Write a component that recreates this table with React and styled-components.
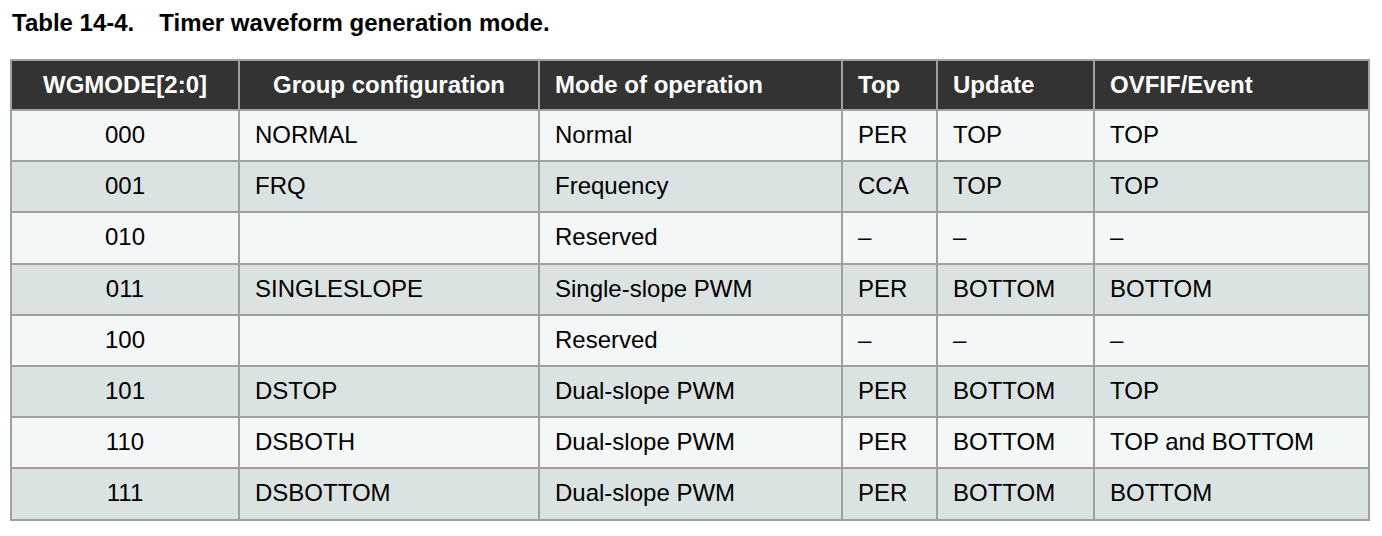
import React from 'react';
import styled, { createGlobalStyle } from 'styled-components';

const GlobalStyle = createGlobalStyle`
  html, body {
    margin: 0;
    padding: 0;
    background: #fff;
  }
`;

const Page = styled.div`
  padding: 9px 0 0 10px;
  font-family: "Liberation Sans", Arial, sans-serif;
  color: #000;
`;

const Caption = styled.div`
  font-size: 24px;
  font-weight: 700;
  line-height: 27px;
  padding-left: 2px;
  margin-bottom: 23px;
  display: flex;
  gap: 25px;
`;

const Grid = styled.div`
  display: grid;
  grid-template-columns: 226px 298px 301px 93px 155px 273px;
  grid-template-rows: 48px;
  grid-auto-rows: 49.2px;
  gap: 2px;
  padding: 2px;
  width: fit-content;
  background: #a0a0a0;
`;

const HeadCell = styled.div`
  background: #333333;
  color: #fff;
  font-weight: 700;
  font-size: 24px;
  display: flex;
  align-items: center;
  justify-content: ${(p) => (p.$center ? 'center' : 'flex-start')};
  padding: 0 15px 1px;
`;

const Cell = styled.div`
  background: ${(p) => (p.$shade ? '#dbe2e2' : '#f4f7f8')};
  font-size: 24px;
  display: flex;
  align-items: center;
  justify-content: ${(p) => (p.$center ? 'center' : 'flex-start')};
  padding: 0 15px 1px;
  white-space: nowrap;
`;

const headers = [
  { label: 'WGMODE[2:0]', center: true },
  { label: 'Group configuration', center: true },
  { label: 'Mode of operation' },
  { label: 'Top' },
  { label: 'Update' },
  { label: 'OVFIF/Event' },
];

const rows = [
  ['000', 'NORMAL', 'Normal', 'PER', 'TOP', 'TOP'],
  ['001', 'FRQ', 'Frequency', 'CCA', 'TOP', 'TOP'],
  ['010', '', 'Reserved', '–', '–', '–'],
  ['011', 'SINGLESLOPE', 'Single-slope PWM', 'PER', 'BOTTOM', 'BOTTOM'],
  ['100', '', 'Reserved', '–', '–', '–'],
  ['101', 'DSTOP', 'Dual-slope PWM', 'PER', 'BOTTOM', 'TOP'],
  ['110', 'DSBOTH', 'Dual-slope PWM', 'PER', 'BOTTOM', 'TOP and BOTTOM'],
  ['111', 'DSBOTTOM', 'Dual-slope PWM', 'PER', 'BOTTOM', 'BOTTOM'],
];

const App = () => {
  return (
    <Page>
      <GlobalStyle />
      <Caption>
        <span>Table 14-4.</span>
        <span>Timer waveform generation mode.</span>
      </Caption>
      <Grid>
        {headers.map((h) => (
          <HeadCell key={h.label} $center={h.center}>
            {h.label}
          </HeadCell>
        ))}
        {rows.map((row, r) =>
          row.map((value, c) => (
            <Cell key={`${r}-${c}`} $shade={r % 2 === 1} $center={c === 0}>
              {value}
            </Cell>
          ))
        )}
      </Grid>
    </Page>
  );
};

export default App;
